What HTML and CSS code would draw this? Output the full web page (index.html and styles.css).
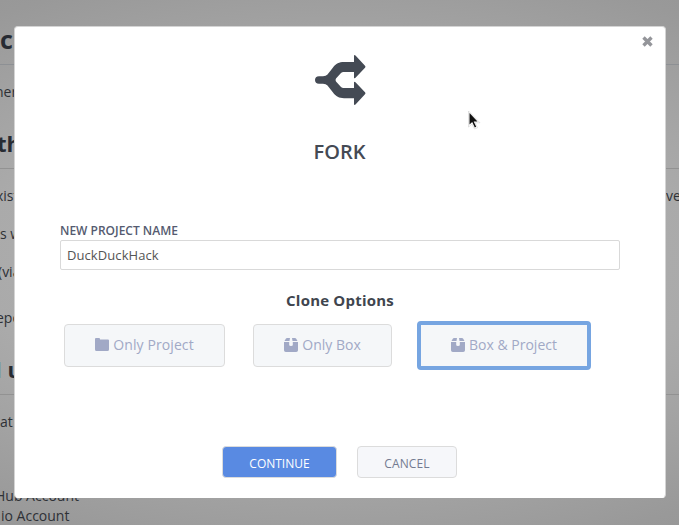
FILE: index.html
```html
<!DOCTYPE html>
<html lang="en">
<head>
<meta charset="utf-8">
<title>Fork project</title>
<link rel="stylesheet" href="styles.css">
</head>
<body>
<svg class="defs" aria-hidden="true">
  <symbol id="box" viewBox="0 0 14 14">
    <path d="M3 0h3l-.5 3H.5L1.800 .7Q2.300 0 3 0zM8 0h3q.7 0 1.200 .7L13.500 3h-5zM0 4h5.200v3Q5.200 8 7 8t1.800-1V4H14v8.200q0 1.800-1.800 1.800H1.800Q0 14 0 12.200z"/>
  </symbol>
</svg>
<main class="doc">
  <h1 class="doc-title">ck</h1>
  <p class="intro">ner</p>
  <h2 class="how">the</h2>
  <p class="row exists"><span>xist</span><span class="tail">ver</span></p>
  <p class="row goes">s w</p>
  <p class="row via">(via</p>
  <p class="row repo">epo</p>
  <h2 class="using"><a>l</a> us</h2>
  <p class="row what">at</p>
  <ul class="accounts"><li class="hub">Hub Account</li><li class="io">io Account</li></ul>
</main>
<div class="overlay">
  <section class="modal">
    <button class="close" aria-label="Close"><svg width="11" height="11" viewBox="0 0 11 11"><path d="M1.500 1.500l8 8M9.500 1.500l-8 8"/></svg></button>
    <svg class="fork" width="51" height="50" viewBox="0 0 51 50"><path d="M4 21.200H8Q11 21 12.500 19.500L18 12.500C21 8.500 24 7 29 7H39V1Q39 -.7 40.500 .5L50 10.700Q51 11.700 50 12.700L40.500 22.700Q39 24 39 22.500V17H28.500Q27 17 26 18L21 23.500Q20 25 21 26.500L26 32Q27 33 28.500 33H39V27.500Q39 26 40.500 27.300L50 37.300Q51 38.300 50 39.300L40.500 49.500Q39 50.700 39 49V43.200H29C24 43.200 21 41.500 18 37.500L12.500 30.500Q11 29 8 28.800H4Q0 28.500 0 25T4 21.200z"/></svg>
    <h3 class="title">FORK</h3>
    <label class="label" for="name">NEW PROJECT NAME</label>
    <input class="name" id="name" value="DuckDuckHack">
    <h4 class="subtitle">Clone Options</h4>
    <div class="options">
      <button class="option project"><svg width="14" height="13" viewBox="0 0 14 13"><path d="M0 1Q0 0 1 0H4Q5 0 5 1V1.500H13Q14 1.500 14 2.500V11.500Q14 13 12.500 13H1.500Q0 13 0 11.500z"/></svg><span>Only Project</span></button>
      <button class="option single"><svg width="14" height="14"><use href="#box"/></svg><span>Only Box</span></button>
      <button class="option selected"><svg width="14" height="14"><use href="#box"/></svg><span>Box &amp; Project</span></button>
    </div>
    <div class="actions">
      <button class="action continue">CONTINUE</button>
      <button class="action cancel">CANCEL</button>
    </div>
  </section>
  <svg class="pointer" width="14" height="20" viewBox="0 0 14 20"><path class="pointer-edge" d="M.5 1v16l3.500-3 2.500 5 3-1.200-2.300-5H12z"/><path d="M1.500 3v11.500l2.700-2.500 2.600 5.400 1.400-.6-2.500-5.400H9.500z"/></svg>
</div>
</body>
</html>
```
FILE: styles.css
```css
* { box-sizing: border-box; }
body {
  margin: 0;
  height: 525px;
  overflow: hidden;
  font-family: "Open Sans", "Noto Sans", sans-serif;
  color: #2e3136;
}
h1, h2, h3, h4, p, ul { margin: 0; padding: 0; }
button { font-family: inherit; padding: 0; }
.defs { position: absolute; width: 0; height: 0; }
.doc {
  height: 525px;
  overflow: hidden;
  background: radial-gradient(ellipse 800px 400px at 340px 262px, #b4b4b4 0%, #aaa 45%, #999 75%, #919191 100%);
  font-size: 14px;
  white-space: nowrap;
}
.doc-title {
  height: 65px;
  padding-top: 22px;
  border-bottom: 1px solid #8d9094;
  font-size: 25px;
  line-height: 34px;
  color: #272b33;
}
.intro { height: 66px; padding-top: 17px; line-height: 20px; text-indent: -5px; }
.how {
  height: 38px;
  border-bottom: 1px solid #929292;
  font-size: 22px;
  line-height: 25px;
  text-indent: -3px;
  color: #272b33;
}
.row { line-height: 20px; height: 38px; }
.exists { display: flex; justify-content: space-between; height: 55px; padding-top: 17px; margin-left: -4px; }
.tail { width: 13px; }
.via { text-indent: -2px; height: 46px; }
.repo { text-indent: -4px; height: 46px; }
.using {
  height: 41px;
  border-bottom: 1px solid #929292;
  font-size: 22px;
  line-height: 31px;
  text-indent: -5px;
  color: #272b33;
}
.using a { color: #3d7893; }
.what { height: 91px; padding-top: 17px; }
.accounts { list-style: none; line-height: 20px; }
.hub { text-indent: -5px; }
.io { text-indent: 1px; }
.overlay {
  position: absolute;
  inset: 0;
  padding: 26px 13px 0 14px;
}
.modal {
  position: relative;
  width: 652px;
  height: 472px;
  padding: 28px 45px 0;
  border: 1px solid #d4d4d4;
  border-bottom-color: #fff;
  border-radius: 4px;
  background: #fff;
  display: flex;
  flex-direction: column;
}
.close {
  position: absolute;
  top: 9px;
  right: 12px;
  width: 11px;
  height: 11px;
  border: 0;
  background: none;
}
.close svg { display: block; fill: none; stroke: #94959a; stroke-width: 3.4; }
.fork { align-self: center; fill: #444a54; overflow: visible; }
.title {
  margin-top: 33px;
  padding-right: 1px;
  text-align: center;
  font-size: 20px;
  font-weight: 600;
  line-height: 28px;
  color: #444a54;
}
.label {
  margin-top: 56px;
  font-size: 12px;
  font-weight: 600;
  line-height: 18px;
  color: #555b70;
}
.name {
  width: 560px;
  height: 30px;
  padding: 0 6px;
  border: 1px solid #d9d9d9;
  border-radius: 2px;
  font: 13px "Open Sans", sans-serif;
  letter-spacing: .08px;
  color: #555;
}
.subtitle {
  margin-top: 19px;
  text-align: center;
  font-size: 15px;
  letter-spacing: .2px;
  font-weight: 700;
  line-height: 22px;
  color: #40454e;
}
.options { display: flex; align-items: center; margin: 10px 0 0 4px; height: 49px; }
.option {
  display: flex;
  align-items: center;
  justify-content: center;
  gap: 4px;
  height: 43px;
  padding-bottom: 2px;
  border: 1px solid #dcdcdc;
  border-radius: 4px;
  background: #f5f7f9;
  color: #a1a9c6;
  font-size: 14px;
  line-height: 20px;
}
.option svg { fill: #a1a9c6; }
.project { width: 161px; letter-spacing: .1px; }
.single { width: 139px; margin-left: 28px; }
.selected { width: 174px; height: 49px; margin-left: 25px; border: 4px solid #76a5e1; }
.actions { display: flex; gap: 20px; margin: 76px 0 0 162px; }
.action {
  height: 32px;
  border: 1px solid #dcdcdc;
  border-radius: 4px;
  font-size: 12px;
  line-height: 18px;
  padding-top: 4px;
}
.continue { width: 115px; background: #598ae2; color: #fff; }
.cancel { width: 100px; background: #f6f7fa; color: #747b91; letter-spacing: .1px; }
.pointer { position: absolute; left: 468px; top: 110px; fill: #111; }
.pointer-edge { fill: #fff; stroke: #d0d0d0; stroke-width: .6; }
```
